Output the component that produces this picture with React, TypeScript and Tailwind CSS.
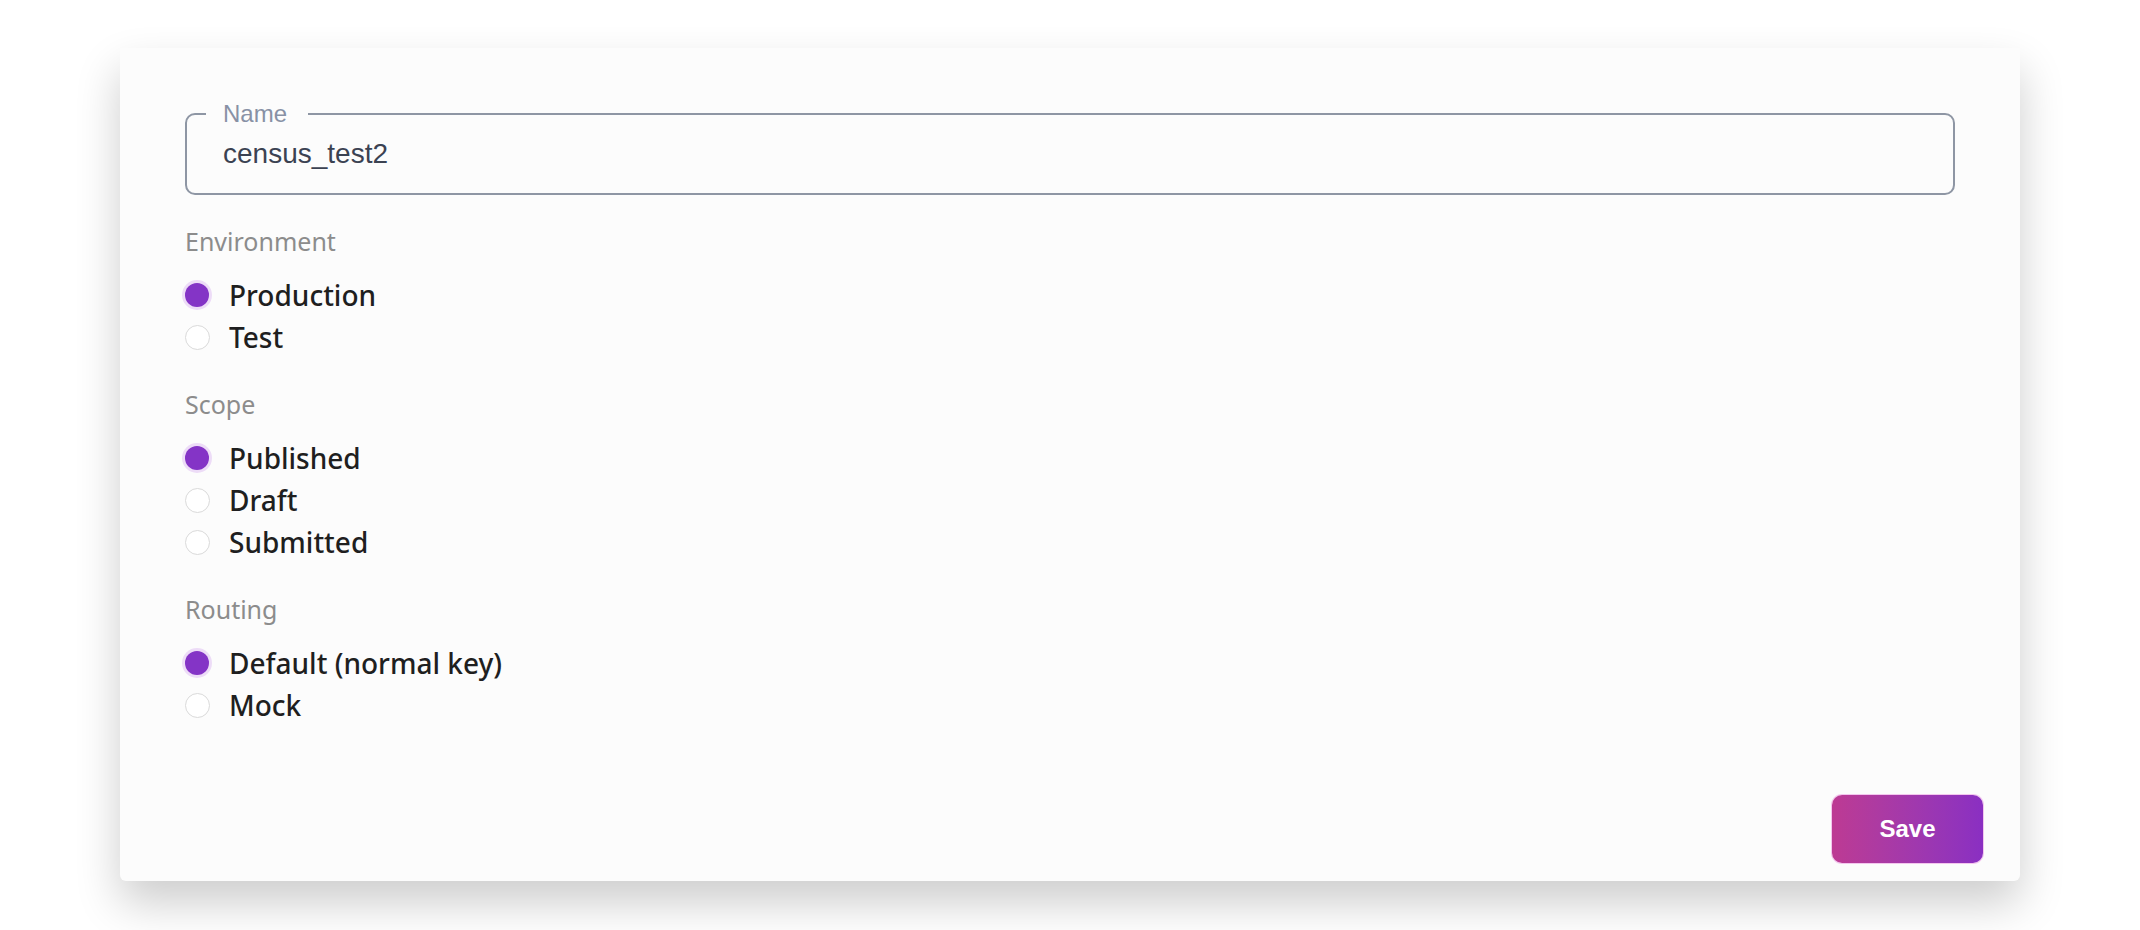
import { useState } from "react";

type Option = { value: string; label: string };

const GROUPS: { id: string; title: string; options: Option[]; initial: string }[] = [
  {
    id: "environment",
    title: "Environment",
    initial: "production",
    options: [
      { value: "production", label: "Production" },
      { value: "test", label: "Test" },
    ],
  },
  {
    id: "scope",
    title: "Scope",
    initial: "published",
    options: [
      { value: "published", label: "Published" },
      { value: "draft", label: "Draft" },
      { value: "submitted", label: "Submitted" },
    ],
  },
  {
    id: "routing",
    title: "Routing",
    initial: "default",
    options: [
      { value: "default", label: "Default (normal key)" },
      { value: "mock", label: "Mock" },
    ],
  },
];

const RadioGroup = ({
  title,
  options,
  value,
  onChange,
}: {
  title: string;
  options: Option[];
  value: string;
  onChange: (v: string) => void;
}) => (
  <div className="mt-[29px] flex flex-col">
    <p className="text-[25px] leading-[34px] text-[#8c8c8c] mb-[16px]">{title}</p>
    {options.map((opt) => {
      const checked = opt.value === value;
      return (
        <label
          key={opt.value}
          className="flex items-center h-[42px] cursor-pointer"
          onClick={() => onChange(opt.value)}
        >
          <span className="w-[44px] flex items-center">
            {checked ? (
              <span className="w-[24px] h-[24px] rounded-full bg-[#8434c6] ring-[3px] ring-[#eddcf7]" />
            ) : (
              <span className="w-[25px] h-[25px] rounded-full border-[1.5px] border-[#dadada] bg-white" />
            )}
          </span>
          <span className="text-[28px] leading-[34px] font-medium text-[#1f1f1f]">{opt.label}</span>
        </label>
      );
    })}
  </div>
);

export default function App() {
  const [name, setName] = useState("census_test2");
  const [values, setValues] = useState<Record<string, string>>(
    Object.fromEntries(GROUPS.map((g) => [g.id, g.initial]))
  );

  return (
    <div className="min-h-screen bg-white pt-[48px] px-[120px]" style={{ fontFamily: '"Noto Sans", sans-serif' }}>
      <div className="bg-[#fcfcfc] rounded-b-[6px] shadow-[0_22px_45px_rgba(0,0,0,0.2)] flex flex-col">
        <div className="px-[65px] pt-[52px]">
          <fieldset className="border-2 border-[#8e96a4] rounded-[10px] pl-[19px] pr-[20px]">
            <legend
              className="pl-[17px] pr-[21px] text-[24px] leading-[28px] text-[#8891a5]"
              style={{ fontFamily: '"Liberation Sans", sans-serif' }}
            >
              Name
            </legend>
            <input
              value={name}
              onChange={(e) => setName(e.target.value)}
              className="w-full bg-transparent outline-none pl-[17px] pt-[10px] pb-[23px] text-[28px] leading-[32px] text-[#3b4252]"
              style={{ fontFamily: '"Liberation Sans", sans-serif' }}
            />
          </fieldset>

          {GROUPS.map((g) => (
            <RadioGroup
              key={g.id}
              title={g.title}
              options={g.options}
              value={values[g.id]}
              onChange={(v) => setValues((prev) => ({ ...prev, [g.id]: v }))}
            />
          ))}
        </div>

        <div className="flex justify-end px-[37px] pt-[69px] pb-[18px]">
          <button
            className="w-[151px] h-[68px] rounded-[10px] bg-gradient-to-r from-[#bd3a93] to-[#8a2fc2] ring-1 ring-[#f3c6ee] text-white text-[24px] font-bold"
            style={{ fontFamily: '"Liberation Sans", sans-serif' }}
          >
            Save
          </button>
        </div>
      </div>
    </div>
  );
}
